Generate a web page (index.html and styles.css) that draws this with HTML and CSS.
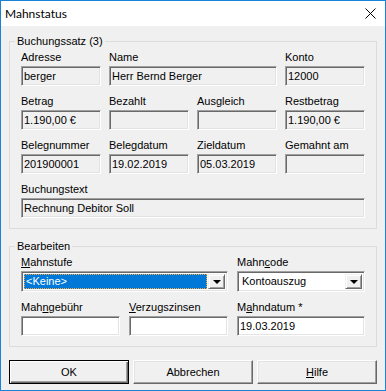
FILE: index.html
```html
<!DOCTYPE html>
<html lang="de">
<head>
  <meta charset="UTF-8">
  <title>Mahnstatus</title>
  <link rel="stylesheet" href="styles.css">
</head>
<body>
  <div class="window">
    <div class="titlebar">
      <span class="title">Mahnstatus</span>
      <span class="close">
        <svg width="11" height="11" viewBox="0 0 11 11"><path d="M0.5 0.5 L10.5 10.5 M10.5 0.5 L0.5 10.5" stroke="#000" stroke-width="1" fill="none"/></svg>
      </span>
    </div>

    <div class="client">
      <!-- Buchungssatz -->
      <fieldset class="group">
        <legend>Buchungssatz (3)</legend>
        <div class="grid grid-booking">
          <div class="field"><label>Adresse</label><div class="edit ro">berger</div></div>
          <div class="field span2"><label>Name</label><div class="edit ro">Herr Bernd Berger</div></div>
          <div class="field"><label>Konto</label><div class="edit ro">12000</div></div>

          <div class="field"><label>Betrag</label><div class="edit ro">1.190,00 €</div></div>
          <div class="field"><label>Bezahlt</label><div class="edit ro"></div></div>
          <div class="field"><label>Ausgleich</label><div class="edit ro"></div></div>
          <div class="field"><label>Restbetrag</label><div class="edit ro">1.190,00 €</div></div>

          <div class="field"><label>Belegnummer</label><div class="edit ro">201900001</div></div>
          <div class="field"><label>Belegdatum</label><div class="edit ro">19.02.2019</div></div>
          <div class="field"><label>Zieldatum</label><div class="edit ro">05.03.2019</div></div>
          <div class="field"><label>Gemahnt am</label><div class="edit ro"></div></div>

          <div class="field span4"><label>Buchungstext</label><div class="edit ro">Rechnung Debitor Soll</div></div>
        </div>
      </fieldset>

      <!-- Bearbeiten -->
      <fieldset class="group group-edit">
        <legend>Bearbeiten</legend>
        <div class="grid grid-edit">
          <div class="field span2">
            <label><u>M</u>ahnstufe</label>
            <div class="combo">
              <div class="combo-text"><span class="combo-sel">&lt;Keine&gt;</span></div>
              <div class="combo-btn"><span class="arrow"></span></div>
            </div>
          </div>
          <div class="field">
            <label>Mahn<u>c</u>ode</label>
            <div class="combo">
              <div class="combo-text"><span class="combo-val">Kontoauszug</span></div>
              <div class="combo-btn"><span class="arrow"></span></div>
            </div>
          </div>

          <div class="field"><label>Mah<u>n</u>gebühr</label><div class="edit"></div></div>
          <div class="field"><label><u>V</u>erzugszinsen</label><div class="edit"></div></div>
          <div class="field"><label>M<u>a</u>hndatum *</label><div class="edit">19.03.2019</div></div>
        </div>
      </fieldset>

      <div class="buttons">
        <button class="btn btn-default">OK</button>
        <button class="btn">Abbrechen</button>
        <button class="btn"><u>H</u>ilfe</button>
      </div>
    </div>
  </div>
</body>
</html>
```

FILE: styles.css
```css
body {
  margin: 0;
  background: #fff;
}
.window {
  width: 386px;
  height: 391px;
  box-sizing: border-box;
  border: 1px solid #1883d7;
  background: #f0f0f0;
  font: 11px "Liberation Sans", Arial, sans-serif;
  color: #000;
}
.titlebar {
  height: 25px;
  background: #fff;
  display: flex;
  align-items: center;
  justify-content: space-between;
  padding: 0 9px 0 4px;
}
.title {
  font: 12px Lato, "Liberation Sans", sans-serif;
}
.close {
  display: flex;
  margin-top: -1px;
}
.client {
  padding: 0 8px;
}
.group {
  border: 1px solid #dcdcdc;
  margin: 9px 0 0;
  padding: 3px 11px 10px;
  min-width: 0;
}
.group legend {
  line-height: 13px;
  padding: 0 2px;
  margin-left: -6px;
}
.group-edit {
  margin-top: 11px;
}
.grid {
  display: grid;
}
.grid-booking {
  grid-template-columns: repeat(4, 80px);
  column-gap: 8px;
  row-gap: 9px;
}
.grid-edit {
  grid-template-columns: 99px 99px 128px;
  column-gap: 9px;
  row-gap: 9px;
}
.span2 {
  grid-column: span 2;
}
.span4 {
  grid-column: span 4;
}
.field label {
  display: block;
  line-height: 13px;
  margin-bottom: 2px;
  white-space: nowrap;
}
.edit {
  height: 20px;
  box-sizing: border-box;
  border: 1px solid;
  border-color: #a0a0a0 #fff #fff #a0a0a0;
  box-shadow: inset 1px 1px #696969, inset -1px -1px #e3e3e3;
  background: #fff;
  padding: 0 2px;
  line-height: 18px;
  white-space: nowrap;
  overflow: hidden;
}
.edit.ro {
  background: #f0f0f0;
}
.combo {
  height: 21px;
  box-sizing: border-box;
  border: 1px solid;
  border-color: #a0a0a0 #fff #fff #a0a0a0;
  box-shadow: inset 1px 1px #696969, inset -1px -1px #e3e3e3;
  background: #fff;
  padding: 2px;
  display: flex;
}
.combo-text {
  flex: 1;
  display: flex;
  padding-right: 1px;
}
.combo-sel {
  flex: 1;
  background: #0078d7;
  color: #fff;
  border: 1px dotted #f7a541;
  padding-left: 1px;
  line-height: 13px;
}
.combo-val {
  padding-left: 2px;
  line-height: 15px;
}
.combo-btn {
  width: 17px;
  box-sizing: border-box;
  background: #f0f0f0;
  border: 1px solid;
  border-color: #f0f0f0 #696969 #696969 #f0f0f0;
  box-shadow: inset 1px 1px #fff, inset -1px -1px #a0a0a0;
  display: flex;
  align-items: center;
  justify-content: center;
}
.arrow {
  width: 0;
  height: 0;
  border-left: 4px solid transparent;
  border-right: 4px solid transparent;
  border-top: 4px solid #000;
  margin-top: 1px;
}
.buttons {
  display: flex;
  gap: 4px;
  margin-top: 13px;
}
.btn {
  width: 120px;
  height: 24px;
  box-sizing: border-box;
  font: inherit;
  color: #000;
  background: #f0f0f0;
  border: 1px solid;
  border-color: #fff #696969 #696969 #fff;
  box-shadow: inset -1px -1px #a0a0a0, inset 1px 1px #e3e3e3;
  padding: 0;
}
.btn-default {
  border: 1px solid #000;
  box-shadow: inset 1px 1px #fff, inset -1px -1px #696969, inset -2px -2px #a0a0a0;
}
```
